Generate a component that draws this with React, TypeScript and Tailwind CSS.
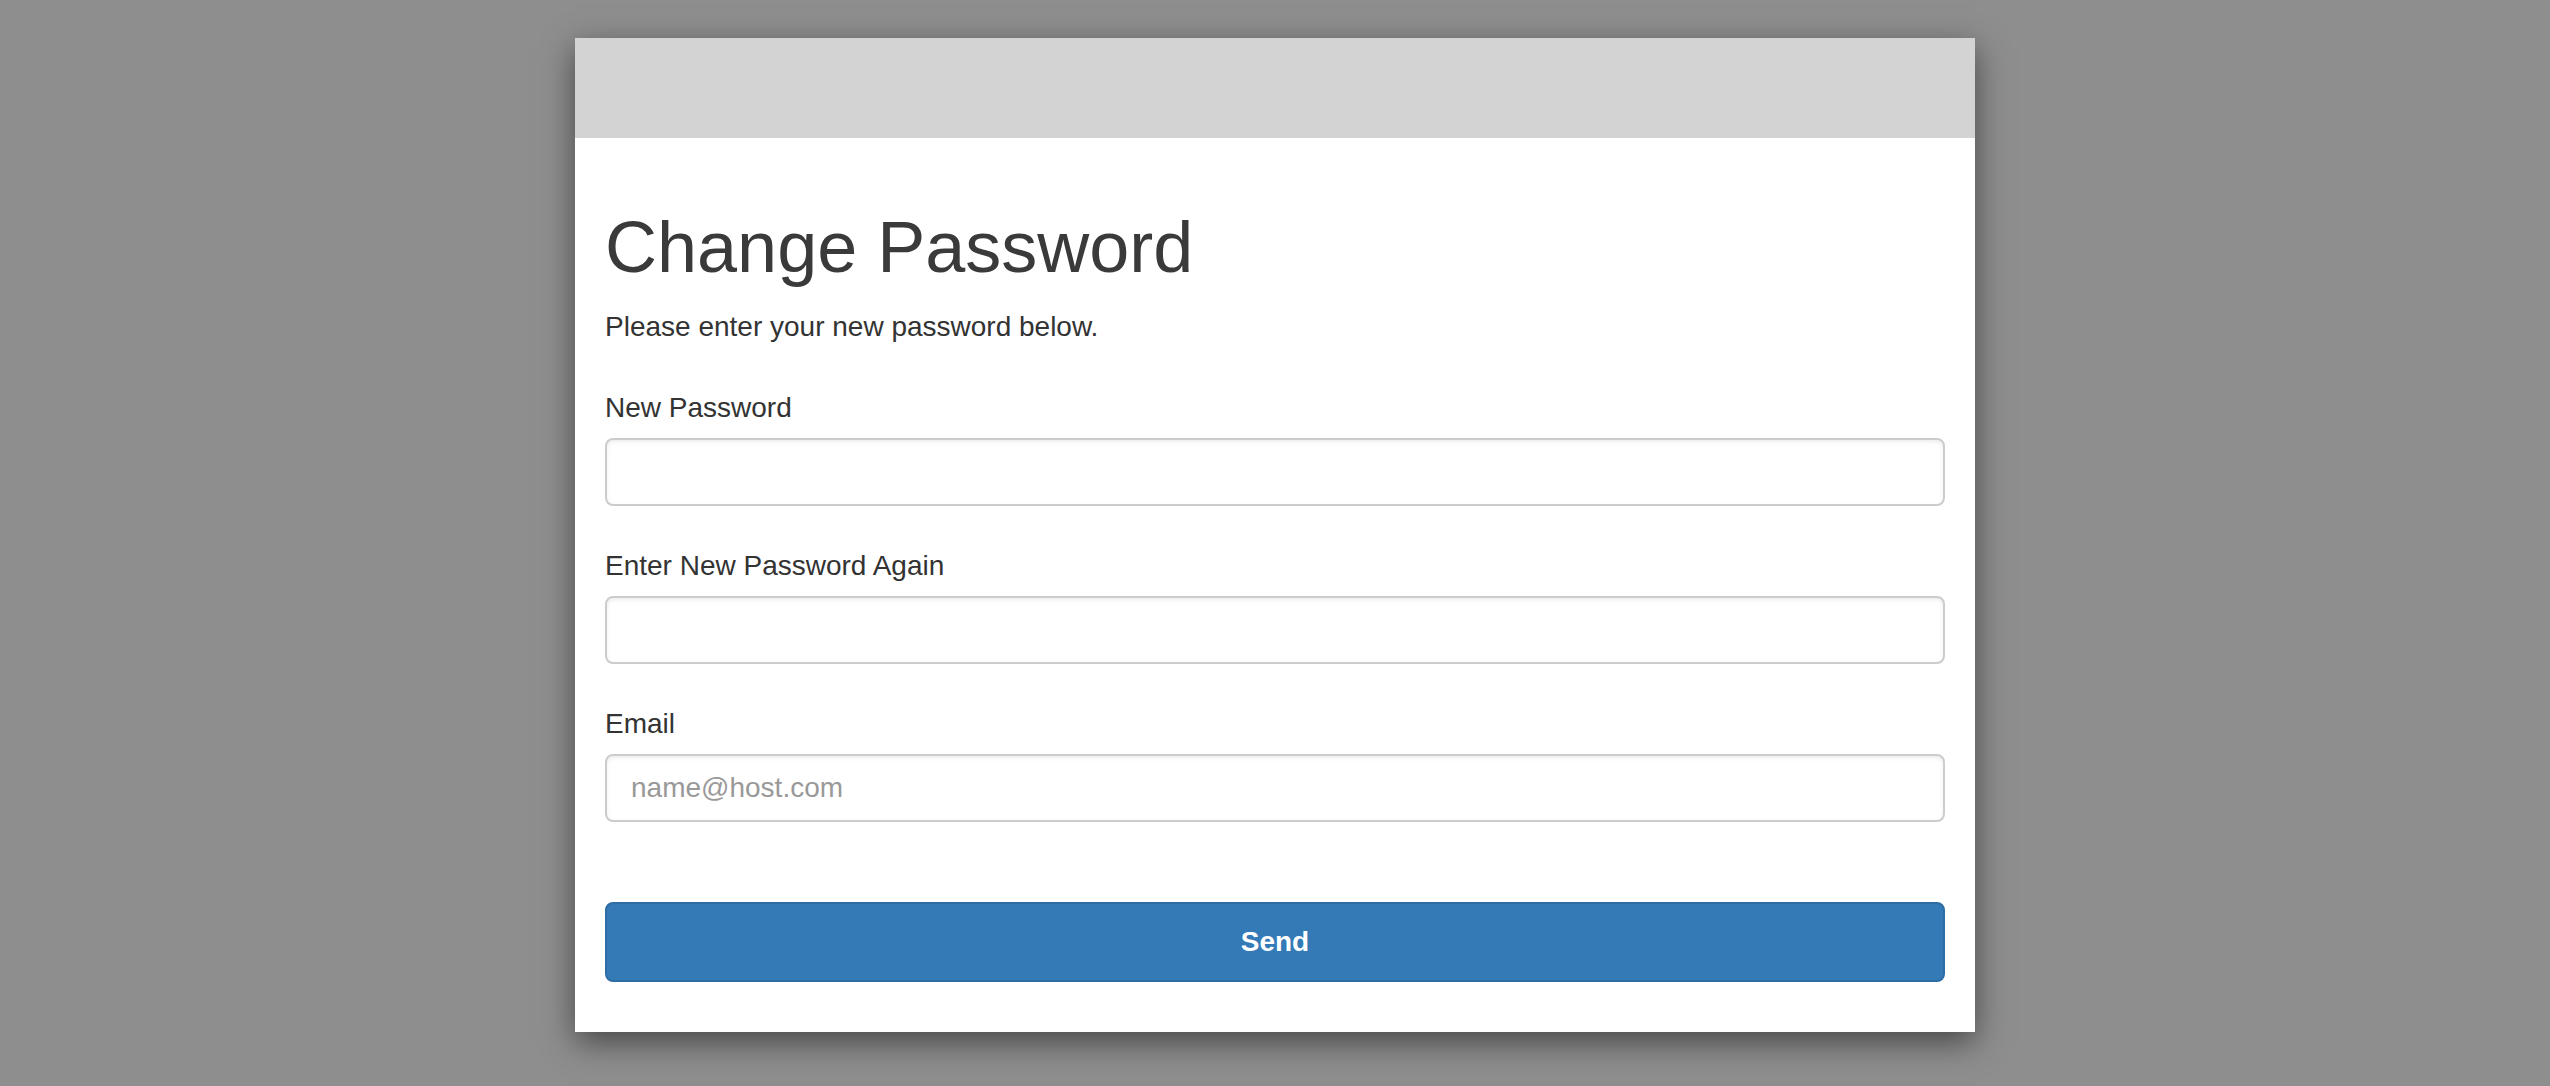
import React from "react";

export default function App() {
  return (
    <div
      className="min-h-screen w-full bg-[#8e8e8e] pt-[38px]"
      style={{ fontFamily: '"Liberation Sans", Arial, Helvetica, sans-serif' }}
    >
      <div className="mx-auto w-[1400px] bg-white shadow-[0_10px_30px_rgba(0,0,0,0.5)]">
        <div className="h-[100px] bg-[#d3d3d3]" />
        <div className="px-[30px] pt-[70px] pb-[50px] text-[#333]">
          <h1 className="text-[72px] leading-[1.1] font-normal text-[#3a3a3a]">Change Password</h1>
          <p className="mt-[20px] text-[28px] leading-[40px]">Please enter your new password below.</p>
          <form className="mt-[41px] flex flex-col gap-[40px]" onSubmit={(e) => e.preventDefault()}>
            <div className="flex flex-col">
              <label className="text-[28px] leading-[40px] mb-[10px]">New Password</label>
              <input
                type="password"
                className="h-[68px] w-full rounded-[8px] border-2 border-[#ccc] bg-white px-[24px] text-[28px] shadow-[inset_0_2px_4px_rgba(0,0,0,0.075)] outline-none"
              />
            </div>
            <div className="flex flex-col">
              <label className="text-[28px] leading-[40px] mb-[10px]">Enter New Password Again</label>
              <input
                type="password"
                className="h-[68px] w-full rounded-[8px] border-2 border-[#ccc] bg-white px-[24px] text-[28px] shadow-[inset_0_2px_4px_rgba(0,0,0,0.075)] outline-none"
              />
            </div>
            <div className="flex flex-col">
              <label className="text-[28px] leading-[40px] mb-[10px]">Email</label>
              <input
                type="email"
                placeholder="name@host.com"
                className="h-[68px] w-full rounded-[8px] border-2 border-[#ccc] bg-white px-[24px] text-[28px] text-[#555] placeholder:text-[#999] shadow-[inset_0_2px_4px_rgba(0,0,0,0.075)] outline-none"
              />
            </div>
            <button
              type="submit"
              className="mt-[40px] h-[80px] w-full rounded-[8px] border-2 border-[#2e6da4] bg-[#337ab7] text-[28px] font-bold text-white"
            >
              Send
            </button>
          </form>
        </div>
      </div>
    </div>
  );
}
